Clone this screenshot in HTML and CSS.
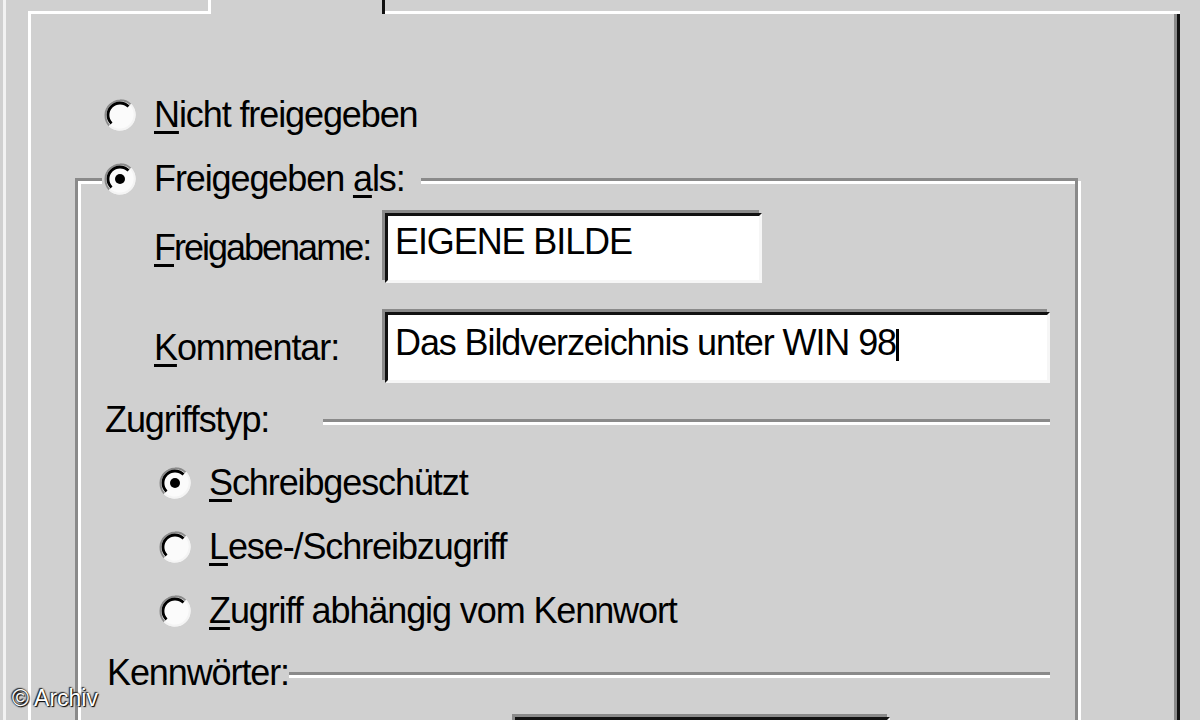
FILE: index.html
```html
<!DOCTYPE html>
<html lang="de">
<head>
    <meta charset="UTF-8">
    <title>Eigenschaften von Eigene Bilder</title>
    <link rel="stylesheet" href="styles.css">
</head>
<body>
    <svg class="defs" width="0" height="0">
        <defs>
            <symbol id="radio" viewBox="0 0 36 36">
                <circle cx="18" cy="18" r="15.5" fill="#fbfbfb"/>
                <path d="M7.4 28.6A15 15 0 0 1 28.6 7.4" fill="none" stroke="#8a8a8a" stroke-width="2"/>
                <path d="M9.5 26.5A12 12 0 0 1 26.5 9.5" fill="none" stroke="#000" stroke-width="2.8"/>
                <path d="M28.6 7.4A15 15 0 0 1 7.4 28.6" fill="none" stroke="#f4f4f4" stroke-width="2"/>
            </symbol>
            <symbol id="radio-on" viewBox="0 0 36 36">
                <use href="#radio"/>
                <circle cx="18" cy="18" r="5" fill="#000"/>
            </symbol>
        </defs>
    </svg>

    <div class="window">
        <div class="sheet">
            <div class="tabs">
                <div class="tab"></div>
                <div class="tab active"></div>
                <div class="tab-fill"></div>
            </div>

            <div class="page">
                <div class="option top-option">
                    <svg class="radio"><use href="#radio"/></svg>
                    <span><u>N</u>icht freigegeben</span>
                </div>

                <fieldset class="group">
                    <legend class="option">
                        <svg class="radio"><use href="#radio-on"/></svg>
                        <span>Freigegeben <u>a</u>ls:</span>
                    </legend>

                    <div class="field-row first">
                        <label class="name-label"><u>F</u>reigabename:</label>
                        <div class="field name-field">EIGENE BILDE</div>
                    </div>
                    <div class="field-row comment-row">
                        <label><u>K</u>ommentar:</label>
                        <div class="field comment-field">Das Bildverzeichnis unter WIN 98<span class="caret"></span></div>
                    </div>

                    <div class="section-row">
                        <span>Zugriffstyp:</span>
                        <div class="rule access-rule"></div>
                    </div>
                    <div class="option access first-access">
                        <svg class="radio"><use href="#radio-on"/></svg>
                        <span><u>S</u>chreibgeschützt</span>
                    </div>
                    <div class="option access">
                        <svg class="radio"><use href="#radio"/></svg>
                        <span><u>L</u>ese-/Schreibzugriff</span>
                    </div>
                    <div class="option access">
                        <svg class="radio"><use href="#radio"/></svg>
                        <span><u>Z</u>ugriff abhängig vom Kennwort</span>
                    </div>

                    <div class="section-row pw-section">
                        <span>Kennwörter:</span>
                        <div class="rule"></div>
                    </div>
                    <div class="field-row pw-row">
                        <div class="field pw-field"></div>
                    </div>
                </fieldset>
            </div>
        </div>
    </div>

    <div class="copyright">© Archiv</div>
</body>
</html>
```

FILE: styles.css
```css
body {
    margin: 0;
    height: 720px;
    overflow: hidden;
    position: relative;
    background-color: #d0d0d0;
    font-family: "Liberation Sans", Arial, sans-serif;
    font-size: 36px;
    line-height: 40px;
    letter-spacing: -1.1px;
    color: #000;
}
.defs {
    position: absolute;
}
u {
    text-decoration-thickness: 3px;
    text-underline-offset: 4px;
}
.window {
    margin-left: 3px;
    padding-left: 22px;
    border-left: 3px solid #f2f2f2;
    height: 720px;
}
.sheet {
    width: 1152px;
}

/* tab strip, only its lower edge is in view */
.tabs {
    display: flex;
    align-items: flex-end;
    height: 14px;
}
.tab {
    box-sizing: border-box;
    flex-shrink: 0;
    width: 180px;
    height: 14px;
    border-bottom: 3px solid #fff;
}
.tab.active {
    width: 177px;
    border-bottom: none;
    border-left: 3px solid #fff;
    border-right: 3px solid #111;
}
.tab-fill {
    flex: 1;
    border-bottom: 3px solid #fff;
}

.page {
    box-sizing: border-box;
    height: 706px;
    padding: 81px 0 0 44px;
    border-left: 3px solid #fff;
    border-right: 3px solid #111;
    box-shadow: inset -3px 0 0 #8a8a8a;
}
.option {
    display: flex;
    align-items: center;
    height: 40px;
}
.radio {
    width: 36px;
    height: 36px;
    margin-right: 16px;
    flex-shrink: 0;
}
.top-option {
    margin-left: 27px;
}

/* group box "Freigegeben als" */
.group {
    box-sizing: border-box;
    width: 1003px;
    margin: 24px 0 0 0;
    padding: 0 25px 0 24px;
    border: 3px solid #8a8a8a;
    box-shadow: inset 3px 3px 0 #fff, 3px 3px 0 #fff;
    min-inline-size: 0;
}
.group legend {
    padding: 0 16px 0 0;
    background-color: #d0d0d0;
}

.field-row {
    display: flex;
    align-items: center;
    margin-left: 52px;
}
.field-row label {
    width: 231px;
    flex-shrink: 0;
}
.name-label {
    letter-spacing: -2px;
}
.field-row.first {
    margin-top: 14px;
}
.comment-row {
    margin-top: 29px;
}
.field {
    box-sizing: border-box;
    padding: 7px 7px;
    background-color: #fff;
    border: 3px solid;
    border-color: #111 #f6f6f6 #f6f6f6 #111;
    box-shadow: -3px -3px 0 #8a8a8a;
    white-space: nowrap;
}
.name-field {
    width: 377px;
    height: 70px;
    padding-top: 6px;
}
.comment-field {
    width: 665px;
    height: 71px;
    padding-top: 8px;
}
.caret {
    display: inline-block;
    vertical-align: top;
    width: 3px;
    height: 32px;
    margin-top: 6px;
    background-color: #000;
}

.section-row {
    display: flex;
    align-items: center;
    height: 40px;
    margin: 17px 0 0 3px;
}
.rule {
    flex: 1;
    height: 0;
    margin-top: 4px;
    border-top: 3px solid #8a8a8a;
    border-bottom: 3px solid #fff;
}
.access-rule {
    margin-left: 54px;
}
.access {
    margin: 24px 0 0 55px;
}
.first-access {
    margin-top: 23px;
}
.pw-section {
    margin: 22px 0 0 5px;
}
.pw-row {
    margin: 24px 0 0 413px;
}
.pw-field {
    width: 375px;
    height: 70px;
}

.copyright {
    position: absolute;
    left: 12px;
    top: 684px;
    font-size: 23px;
    line-height: 28px;
    letter-spacing: 0;
    color: #fff;
    text-shadow: 0 0 2px #000, 1px 1px 1px #000, -1px -1px 1px #333;
}
```
